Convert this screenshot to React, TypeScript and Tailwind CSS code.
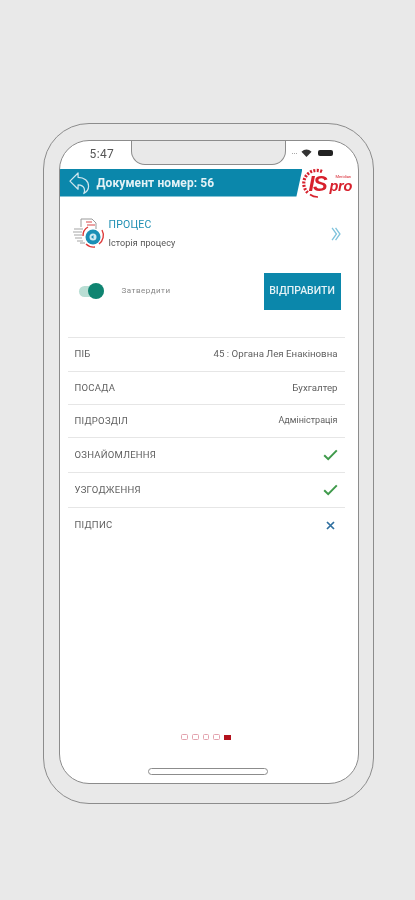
const F = "font-['Roboto','Liberation_Sans',sans-serif]";

function Check() {
  return (
    <svg width="15" height="12" viewBox="0 0 15 12" fill="none">
      <path d="M1.2 6.2 L5.2 10.2 L13.8 1.4" stroke="#3f9a4b" strokeWidth="2" />
    </svg>
  );
}

function Row({ label, value, icon, h, last, small }: { label: string; value?: string; icon?: React.ReactNode; h: string; last?: boolean; small?: boolean }) {
  return (
    <div className={`flex items-center justify-between pl-[7px] pr-[7px] ${h} ${last ? "" : "border-b border-[#e6e6e6]"}`}>
      <span className="text-[9.5px] text-[#5f5f5f] tracking-[0.25px]">{label}</span>
      {value && <span className={`${small ? "text-[9px]" : "text-[9.7px]"} text-[#5f5f5f]`}>{value}</span>}
      {icon}
    </div>
  );
}

function ProcessIcon() {
  return (
    <svg width="34" height="34" viewBox="0 0 34 34" fill="none">
      <path d="M9 3h11l4 4v6M9 3v8M8 27h5" stroke="#9a9a9a" strokeWidth="1" />
      <path d="M2 13h9M1 16h9M2 19h8M3 22h7M5 25h6" stroke="#a5a5a5" strokeWidth="1" />
      <path d="M14 6h6M15 9h8" stroke="#d9484a" strokeWidth="1.2" />
      <path d="M11 20a10 10 0 0 1 5-9M30 14a11 11 0 0 1-3 14M14 28a11 11 0 0 0 9 3" stroke="#df3b3b" strokeWidth="1.4" />
      <circle cx="21" cy="21" r="7.5" fill="#1b8fb6" />
      <circle cx="21" cy="21" r="3.5" fill="#cfe9f2" />
      <path d="M19 21l2.5-2v4z" fill="#1b8fb6" />
    </svg>
  );
}

function Logo() {
  return (
    <div className="bg-white w-[54px] h-[30px] relative">
      <svg width="26" height="30" viewBox="0 0 26 30" fill="none" className="absolute left-0 top-0">
        <path d="M20 3.5 A13 13 0 0 0 6 25" stroke="#d7202c" strokeWidth="3.2" strokeDasharray="2 1.4" />
        <path d="M8 26.5 A13 13 0 0 0 16 29" stroke="#d7202c" strokeWidth="1.6" />
      </svg>
      <span className="absolute left-[7px] top-[5px] text-[22px] leading-[21px] font-bold italic text-[#d7202c] font-['Liberation_Sans',sans-serif] tracking-[-1.5px]">IS</span>
      <span className="absolute left-[28px] top-[11px] text-[14.5px] leading-[15px] font-bold italic text-[#d7202c] font-['Liberation_Sans',sans-serif] tracking-[-0.3px]">pro</span>
      <span className="absolute left-[34px] top-[6px] text-[4px] leading-[5px] text-[#d7202c]">Meridian</span>
    </div>
  );
}

export default function App() {
  return (
    <div className={`h-[900px] w-[415px] bg-[#e9e9e9] pt-[123px] pl-[43px] overflow-hidden ${F} blur-[0.45px]`}>
      <div className="w-[331px] h-[681px] rounded-[46px] border-[1.5px] border-[#8c8c8c] pt-[16px] pl-[14.5px]">
        <div className="relative w-[300px] h-[644px] rounded-[30px] border-[1.5px] border-[#8c8c8c] bg-white flex flex-col overflow-hidden">
          <div className="absolute left-[71px] -top-[2px] w-[155px] h-[26px] bg-[#e9e9e9] border-x-[1.5px] border-b-[1.5px] border-[#8c8c8c] rounded-b-[14px]" />
          <div className="h-[27.5px] shrink-0 flex items-start justify-between pl-[30px] pr-[25px] pt-[7px]">
            <span className="text-[12px] leading-[13px] text-[#555] tracking-[0.4px]">5:47</span>
            <div className="flex items-center mt-[1px]">
              <div className="flex gap-[1px] mr-[4px]">
                <div className="w-[1px] h-[1px] bg-[#aaa]" />
                <div className="w-[1px] h-[1px] bg-[#aaa]" />
                <div className="w-[1px] h-[1px] bg-[#aaa]" />
              </div>
              <svg className="mr-[6px]" width="11" height="8" viewBox="0 0 12 9"><path d="M6 9 0.3 3Q6-1.6 11.7 3z" fill="#333" /></svg>
              <div className="w-[15px] h-[6px] rounded-[2px] bg-[#222]" />
            </div>
          </div>
          <div className="relative h-[28px] shrink-0 flex">
            <div className="w-[243px] bg-[#0b87ab] [clip-path:polygon(0_0,100%_0,97.5%_100%,0_100%)] flex items-center pl-[9px] gap-[7px]">
              <svg width="21" height="24" viewBox="0 0 22 24" fill="none" stroke="#cfe6ee" strokeWidth="1.3" strokeLinejoin="round">
                <path d="M1 10 9.5 1.5V6C16 6 20.5 10 20.5 15.5 20.5 19 18.5 21.5 15.5 23 17 20 17 14.5 9.5 14V18.5z" />
              </svg>
              <span className="text-[12px] font-bold text-[#e4f2f6] tracking-[0.1px]">Документ номер: 56</span>
            </div>
            <div className="absolute right-[2px] -top-[1px]"><Logo /></div>
          </div>
          <div className="h-[140.5px] shrink-0 flex flex-col px-[5px]">
            <div className="flex items-start pl-[7px] pr-[11px] pt-[19px]">
              <ProcessIcon />
              <div className="ml-[3px] flex flex-col pt-[2px]">
                <span className="text-[10.5px] leading-[14px] text-[#1f8fb3] tracking-[0.2px]">ПРОЦЕС</span>
                <span className="text-[9px] leading-[12px] mt-[5px] text-[#555] tracking-[0.1px]">Історія процесу</span>
              </div>
              <svg className="ml-auto mt-[11px]" width="12" height="14" viewBox="0 0 11 16" fill="none" stroke="#7fc3dc" strokeWidth="1.5">
                <path d="M1 1 6 8 1 15M5 1 10 8 5 15" />
              </svg>
            </div>
            <div className="flex items-center mt-[23px] pl-[14px]">
              <div className="relative w-[25px] h-[11px] rounded-full bg-[#b9ded4]">
                <div className="absolute right-0 -top-[2.5px] w-[16px] h-[16px] rounded-full bg-[#0f8471]" />
              </div>
              <span className="ml-[18px] text-[8px] text-[#888] tracking-[0.5px]">Затвердити</span>
              <div className="ml-auto mr-[12px] w-[77px] h-[37px] bg-[#0b87ab] flex items-center justify-center text-[10.5px] font-medium text-[#e4f2f6]">ВІДПРАВИТИ</div>
            </div>
          </div>
          <div className="mx-[8px] w-[277px] border-t border-[#e6e6e6] flex flex-col">
            <Row h="h-[34px]" label="ПІБ" value="45 : Органа Лея Енакіновна" />
            <Row h="h-[33px]" label="ПОСАДА" value="Бухгалтер" />
            <Row h="h-[33px]" small label="ПІДРОЗДІЛ" value="Адміністрація" />
            <Row h="h-[35px]" label="ОЗНАЙОМЛЕННЯ" icon={<Check />} />
            <Row h="h-[35px]" label="УЗГОДЖЕННЯ" icon={<Check />} />
            <Row h="h-[35px]" last label="ПІДПИС" icon={
              <svg className="mr-[3px]" width="9" height="9" viewBox="0 0 9 9" stroke="#2f6f9f" strokeWidth="1.7"><path d="M1 1 8 8M8 1 1 8" /></svg>
            } />
          </div>
          <div className="mt-auto flex flex-col items-center">
            <div className="flex items-center gap-[4px] mr-[5px]">
              {[0, 1, 2, 3].map((i) => (
                <div key={i} className="w-[6.7px] h-[6px] rounded-[1.5px] border border-[#e3a3ae]" />
              ))}
              <div className="w-[6.7px] h-[5px] bg-[#b3121d]" />
            </div>
            <div className="mt-[28px] mb-[8px] w-[120px] h-[7px] mr-[2px] rounded-full border border-[#8c8c8c] bg-white" />
          </div>
        </div>
      </div>
    </div>
  );
}
